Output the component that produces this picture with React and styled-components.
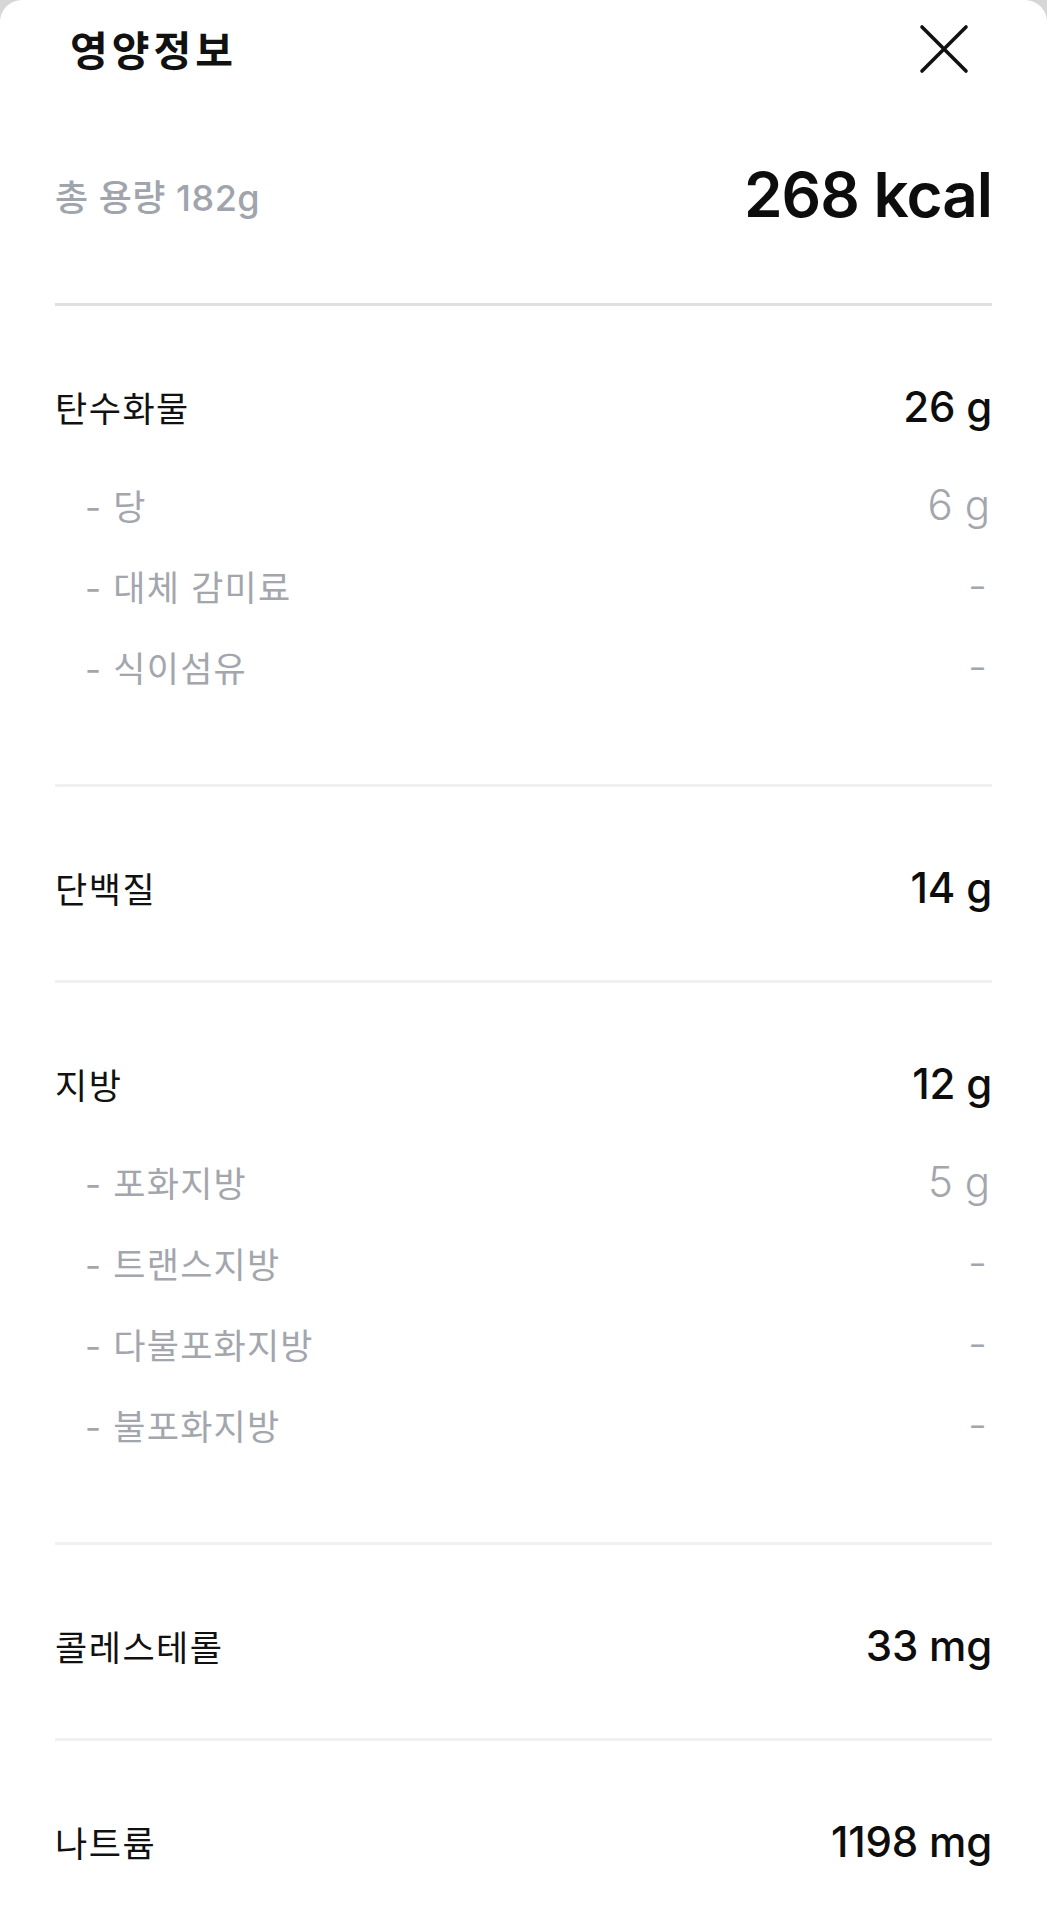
import React from "react";
import styled, { createGlobalStyle } from "styled-components";

const GlobalStyle = createGlobalStyle`
  html, body {
    margin: 0;
    padding: 0;
    background: #d6d6d6;
  }
  body {
    font-family: "Inter", "Noto Sans CJK KR", sans-serif;
    color: #111;
  }
`;

const nutrients = [
  {
    label: "탄수화물",
    value: "26 g",
    subs: [
      { label: "당", value: "6 g" },
      { label: "대체 감미료", value: "-" },
      { label: "식이섬유", value: "-" },
    ],
  },
  { label: "단백질", value: "14 g" },
  {
    label: "지방",
    value: "12 g",
    subs: [
      { label: "포화지방", value: "5 g" },
      { label: "트랜스지방", value: "-" },
      { label: "다불포화지방", value: "-" },
      { label: "불포화지방", value: "-" },
    ],
  },
  { label: "콜레스테롤", value: "33 mg" },
  { label: "나트륨", value: "1198 mg" },
];

export default function App() {
  return (
    <>
      <GlobalStyle />
      <Sheet>
        <Header>
          <Title>영양정보</Title>
          <CloseButton aria-label="닫기">
            <svg width="50" height="50" viewBox="0 0 50 50">
              <path
                d="M3 3 L47 47 M47 3 L3 47"
                stroke="#111"
                strokeWidth="3.6"
                strokeLinecap="round"
                fill="none"
              />
            </svg>
          </CloseButton>
        </Header>

        <Content>
          <Summary>
            <TotalAmount>총 용량 182g</TotalAmount>
            <Calories>268 kcal</Calories>
          </Summary>

          {nutrients.map((n, i) => (
            <Section key={n.label} $first={i === 0}>
              <MainRow>
                <MainLabel>{n.label}</MainLabel>
                <MainValue>{n.value}</MainValue>
              </MainRow>
              {n.subs && (
                <SubList>
                  {n.subs.map((s) => (
                    <SubRow key={s.label}>
                      <SubLabel>- {s.label}</SubLabel>
                      <SubValue $dash={s.value === "-"}>{s.value}</SubValue>
                    </SubRow>
                  ))}
                </SubList>
              )}
            </Section>
          ))}
        </Content>
      </Sheet>
    </>
  );
}

const Sheet = styled.div`
  background: #fff;
  min-height: 1920px;
  border-radius: 22px 22px 0 0;
  overflow: hidden;
`;

const Header = styled.div`
  height: 97px;
  display: flex;
  align-items: center;
  justify-content: space-between;
  padding: 0 78px 0 70px;
`;

const Title = styled.h1`
  margin: 0;
  font-family: "Noto Sans CJK KR", sans-serif;
  font-size: 41px;
  font-weight: 700;
  letter-spacing: 4px;
  line-height: 1;
  color: #111;
`;

const CloseButton = styled.button`
  border: none;
  background: none;
  padding: 0;
  width: 50px;
  height: 50px;
  display: flex;
  cursor: pointer;
`;

const Content = styled.div`
  padding: 0 55px;
`;

const Summary = styled.div`
  height: 196px;
  padding-bottom: 10px;
  display: flex;
  align-items: center;
  justify-content: space-between;
`;

const TotalAmount = styled.span`
  font-size: 36px;
  font-weight: 500;
  color: #a0a4ac;
  letter-spacing: 0.5px;
`;

const Calories = styled.span`
  font-size: 62px;
  font-weight: 600;
  letter-spacing: -1px;
  color: #0d0d0d;
  line-height: 1;
`;

const Section = styled.div`
  border-top: 3px solid ${(p) => (p.$first ? "#dde1e4" : "#eef0f2")};
  padding: 59px 0 52px;
`;

const MainRow = styled.div`
  height: 82px;
  display: flex;
  align-items: center;
  justify-content: space-between;
`;

const MainLabel = styled.span`
  font-family: "Noto Sans CJK KR", sans-serif;
  font-size: 35px;
  font-weight: 400;
  color: #111;
  letter-spacing: 1.5px;
`;

const MainValue = styled.span`
  font-size: 42px;
  font-weight: 500;
  letter-spacing: -0.2px;
  color: #0d0d0d;
`;

const SubList = styled.div`
  padding: 17px 0 25px;
`;

const SubRow = styled.div`
  height: 81px;
  display: flex;
  align-items: center;
  justify-content: space-between;
  padding-left: 30px;
`;

const SubLabel = styled.span`
  font-size: 35px;
  font-weight: 400;
  color: #a3a6ad;
  letter-spacing: 1.2px;
`;

const SubValue = styled.span`
  font-size: 42px;
  font-weight: 300;
  letter-spacing: 0px;
  color: #a3a6ad;
  padding-right: ${(p) => (p.$dash ? "5px" : "2px")};
`;
